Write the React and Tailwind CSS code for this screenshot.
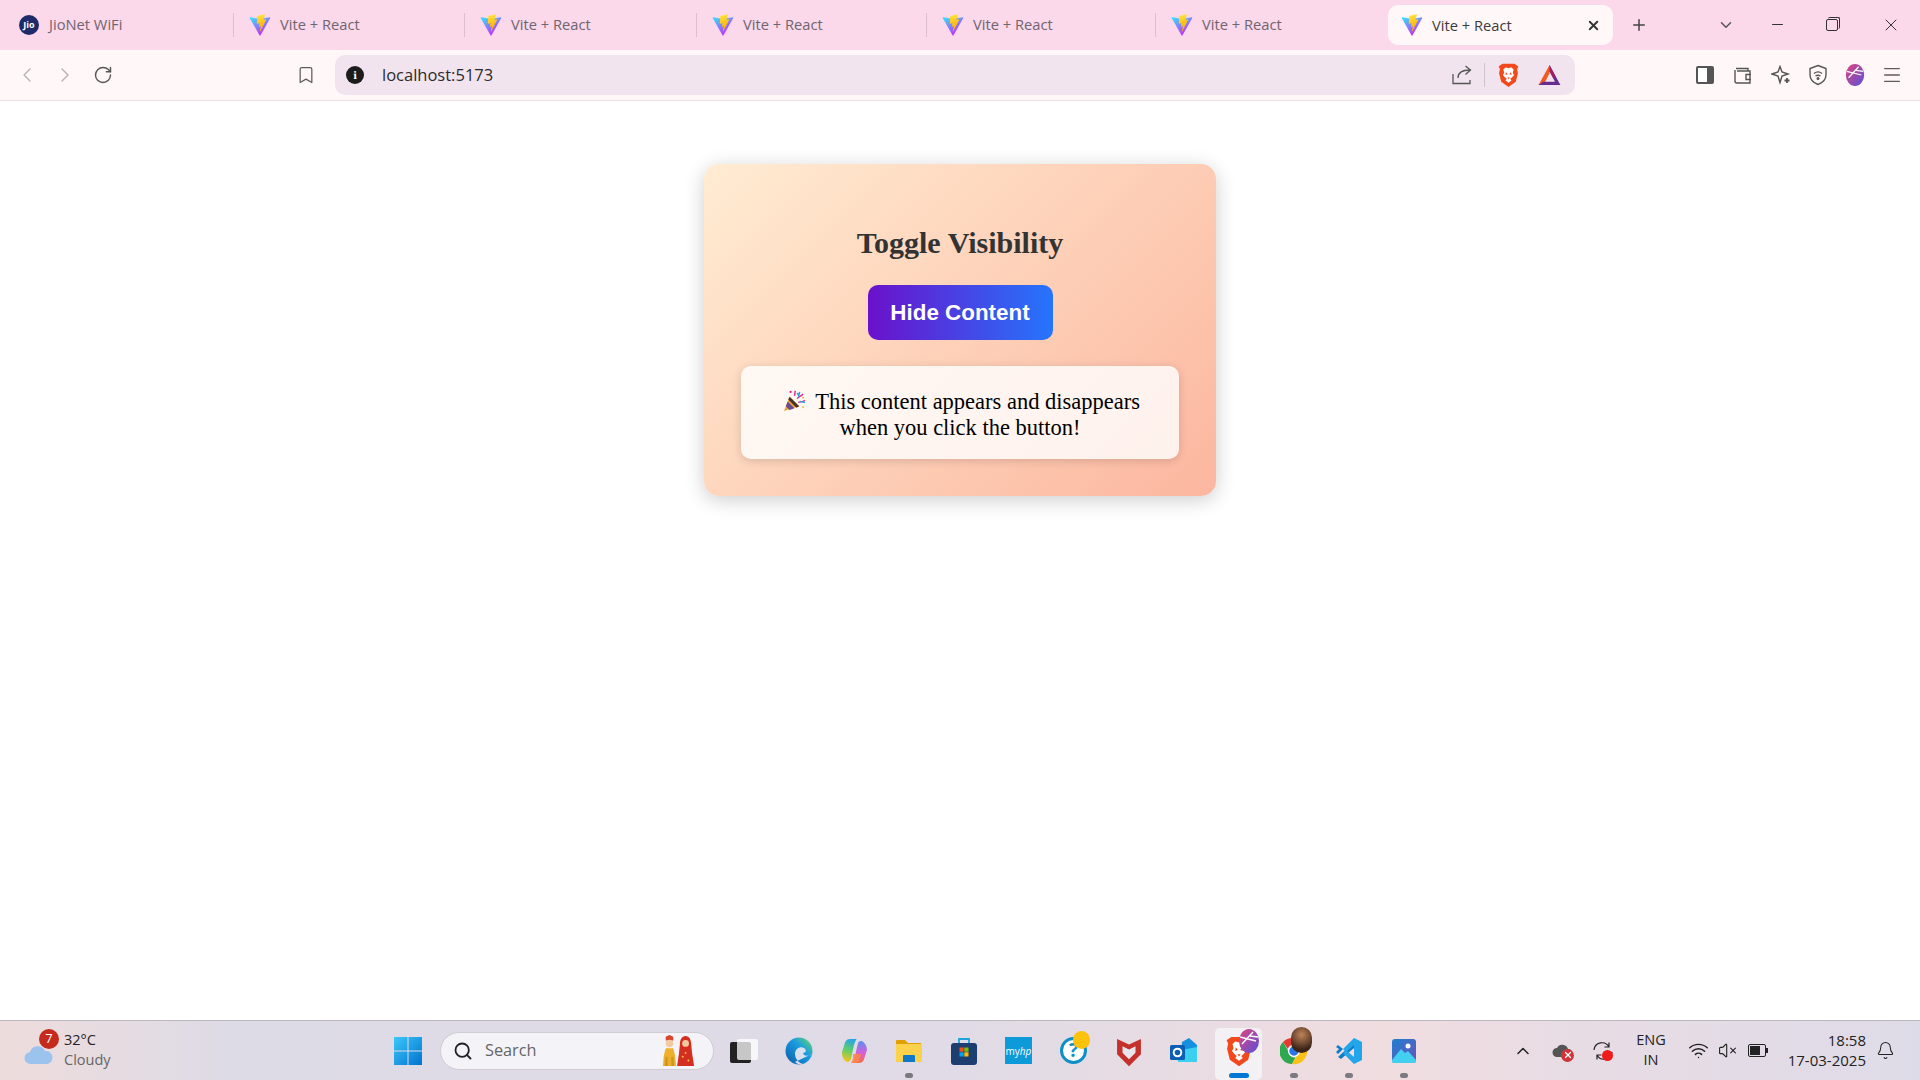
import { ChevronLeft, ChevronRight, RotateCw, Bookmark, X, Plus, ChevronDown, ChevronUp, Minus, Search, Wifi, VolumeX, Bell, Menu } from 'lucide-react'

const tabs = [
  { title: 'Vite + React', w: 'w-[231px]' },
  { title: 'Vite + React', w: 'w-[232px]' },
  { title: 'Vite + React', w: 'w-[230px]' },
  { title: 'Vite + React', w: 'w-[229px]' },
  { title: 'Vite + React', w: 'w-[233px]' },
]

function ViteIcon() {
  return (
    <svg viewBox="1.500 0.500 29 30" className="h-[22px] w-[22px] shrink-0">
      <defs>
        <linearGradient id="viteA" x1="0.1" y1="0.1" x2="0.6" y2="0.9">
          <stop offset="0" stopColor="#41d1ff" />
          <stop offset="1" stopColor="#bd34fe" />
        </linearGradient>
        <linearGradient id="viteB" x1="0.4" y1="0" x2="0.55" y2="0.9">
          <stop offset="0" stopColor="#ffea83" />
          <stop offset="0.1" stopColor="#ffdd35" />
          <stop offset="1" stopColor="#ffa800" />
        </linearGradient>
      </defs>
      <path fill="url(#viteA)" d="M29.8836 6.146L16.7418 29.6457c-.2714.4851-.9684.488-1.2439.0052L2.0956 6.1482c-.3-.5262.1498-1.1635.7462-1.0569l13.1559 2.3516a.7.7 0 0 0 .2532-.0005l12.8806-2.3478c.5942-.1083 1.0464.5241.7521 1.051z" />
      <path fill="url(#viteB)" d="M22.2644 1.0071l-9.7253 1.9056a.3571.3571 0 0 0-.2878.3294l-.5982 10.1038a.3571.3571 0 0 0 .4371.3689l2.7077-.6248c.2533-.0585.4822.1646.4301.4194l-.8045 3.9393c-.0542.2651.1947.4918.4536.4132l1.6724-.508c.2593-.0787.5084.1487.4536.414l-1.2784 6.1877c-.08.3871.4349.5981.6497.2662l.1434-.2215 7.925-15.8151c.1327-.2648-.096-.5667-.3872-.5104l-2.7872.5379c-.2619.0505-.4848-.1934-.4109-.4495l1.819-6.3056c.0739-.2565-.1497-.5006-.4121-.4494z" />
    </svg>
  )
}

function BraveIcon({ className }) {
  return (
    <svg viewBox="0 0 24 28" className={className}>
      <path fill="#f1491c" d="M12 28 3.500 22 1 12l1-5L0.500 4 5 1h14l4.500 3L22 7l1 5-2.500 10z" />
      <path fill="#fff" d="M12 6c-1 0-2-.8-3.500-.8L6 7.500l1 4-1.500 2.500L8 17l2 1.500-1.500 2L12 23l3.500-2.500-1.500-2L16 17l2.500-3L17 11.500l1-4-2.500-2.300C14 5.200 13 6 12 6z" />
      <path fill="#f1491c" d="M9 10.500l2 2.500-2.500 1zM15 10.500l-2 2.500 2.500 1zM10.500 17h3L12 19z" />
    </svg>
  )
}

function BatIcon() {
  return (
    <svg viewBox="0 0 24 22" className="h-[20px] w-[23px]">
      <path fill="#662d91" d="M12 0 24 22H13l5-3.500L12 7z" />
      <path fill="#f15a22" d="M12 0 0 22h5.500L12 9z" />
      <path fill="#9e1f63" d="M12 0l6.500 12-2 3L12 7z" />
      <path fill="#662d91" d="M0 22l5-3.500h13L24 22z" />
    </svg>
  )
}

function ProfileIcon({ className }) {
  return (
    <svg viewBox="0 0 20 24" className={className}>
      <defs>
        <linearGradient id="prof" x1="0" y1="0" x2="1" y2="1">
          <stop offset="0" stopColor="#e0457f" />
          <stop offset="1" stopColor="#5a50d8" />
        </linearGradient>
      </defs>
      <ellipse cx="10" cy="12" rx="10" ry="12" fill="url(#prof)" />
      <path d="M1 8l16 4M3 15 14 3M11 7l8 1" stroke="#fff" strokeWidth="1.300" fill="none" />
    </svg>
  )
}

function TabBar() {
  return (
    <div className="flex h-[50px] items-center bg-[#fbd8ea] pb-[1px] text-[14.700px] text-[#6f6570]">
      <div className="flex h-[49px] w-[233px] items-center gap-[10px] pl-[19px]">
        <span className="flex h-5 w-5 items-center justify-center rounded-full bg-[#1f2a6b] text-[9px] font-bold text-white">Jio</span>
        <span>JioNet WiFi</span>
      </div>
      {tabs.map((t, i) => (
        <div key={i} className={`flex h-[49px] items-center ${t.w}`}>
          <div className="flex h-6 items-center gap-[9px] border-l border-[#dcc0d0] pl-[15px]">
            <ViteIcon />
            <span>{t.title}</span>
          </div>
        </div>
      ))}
      <div className="mt-[1px] flex h-10 w-[225px] items-center rounded-[10px] bg-[#fff7f8] pl-[13px] pr-[12px] text-[#3f3a40]">
        <ViteIcon />
        <span className="ml-[9px]">Vite + React</span>
        <X size={15} strokeWidth={3} className="ml-auto text-[#333]" />
      </div>
      <Plus size={18} strokeWidth={2} className="ml-[17px] text-[#444]" />
      <ChevronDown size={18} strokeWidth={2} className="ml-[69px] text-[#555]" />
      <Minus size={17} strokeWidth={1.500} className="ml-[34px] text-[#333]" />
      <div className="relative ml-[40px] h-3 w-3 rounded-[2px] border border-[#333]">
        <div className="absolute -right-[3px] -top-[3px] h-3 w-3 rounded-[2px] border-r border-t border-[#333]" />
      </div>
      <X size={20} strokeWidth={1.200} className="ml-[43px] text-[#333]" />
    </div>
  )
}

function Toolbar() {
  return (
    <div className="flex h-[51px] items-center border-b border-[#f2dde3] bg-[#fff7f8] text-[#5d5d5d]">
      <ChevronLeft size={24} strokeWidth={1.300} className="ml-[15px] text-[#b5b0b3]" />
      <ChevronRight size={24} strokeWidth={1.300} className="ml-[14px] text-[#b5b0b3]" />
      <RotateCw size={20} strokeWidth={1.700} className="ml-[16px] text-[#555]" />
      <Bookmark size={20} strokeWidth={1.500} className="ml-[183px]" />
      <div className="ml-[19px] flex h-10 w-[1240px] items-center rounded-[10px] bg-[#f2e4ef]">
        <span className="ml-[11px] flex h-[18px] w-[18px] items-center justify-center rounded-full bg-[#1c1c1c] font-serif text-[12px] font-bold leading-none text-white">i</span>
        <span className="ml-[18px] font-['Open_Sans',sans-serif] text-[16.500px] text-[#2b2b2b]">localhost:5173</span>
        <svg viewBox="0 0 20 20" fill="none" stroke="#555" strokeWidth="1.300" className="ml-auto h-5 w-5">
          <path d="M1 9v9.500h17V15M6 13c0-5 4-8 12-8M13.500 1 18.500 5l-5 4.500" />
        </svg>
        <div className="ml-[12px] h-6 w-px bg-[#cdc2ca]" />
        <BraveIcon className="ml-[13px] h-[24px] w-[21px]" />
        <div className="ml-[19px] mr-[14px]"><BatIcon /></div>
      </div>
      <div className="ml-[121px] h-[18px] w-[18px] rounded-[2px] border-2 border-r-[7px] border-[#555] bg-white" />
      <svg viewBox="0 0 20 20" fill="none" stroke="#555" strokeWidth="1.400" className="ml-[19px] h-5 w-5">
        <path d="M3 3.500h12v2.500M2 5v11a2 2 0 0 0 2 2h13V6H4M18 9.500h-5v5h5" />
      </svg>
      <svg viewBox="0 0 20 20" fill="none" stroke="#555" strokeWidth="1.400" className="ml-[18px] h-5 w-5">
        <path d="M9 1.500 11 7l6 2-6 2-2 6.500L7 11 1 9l6-2z" />
        <path d="M16 13v5M13.500 15.500h5" strokeWidth="1.800" />
      </svg>
      <svg viewBox="0 0 20 22" fill="none" stroke="#555" strokeWidth="1.400" className="ml-[17px] h-[22px] w-5">
        <path d="M10 1.500 18 4.500v6c0 5-4 8.500-8 10-4-1.500-8-5-8-10v-6z" />
        <path d="M6 9.500c2.500-2 5.500-2 8 0M7.500 12c1.500-1 3.500-1 5 0" />
        <circle cx="10" cy="14.500" r="0.800" fill="#555" />
      </svg>
      <ProfileIcon className="ml-[17px] h-[22px] w-5" />
      <Menu size={22} strokeWidth={1.400} className="ml-[16px]" />
    </div>
  )
}

function PartyPopper() {
  return (
    <svg viewBox="-3 0 27 24" className="mr-[4px] inline-block h-[23px] w-[26px] align-[-3px]">
      <path fill="#e8a33a" d="M1 23 7 8l10 10z" />
      <path fill="#6b4a8c" d="M3 18l2-5 7 7-5 2z" />
      <path fill="#4a3325" d="M7 8l10 10-3 1.500L5.500 11z" />
      <path d="M12 7c1-2 0-3 1-5M15 10c2-3 4-2 6-5M16 14c2-1 4 0 7-2" stroke="#e91e8c" strokeWidth="1.500" fill="none" />
      <path d="M15 4l1.500 3 1-4M18 13c2 0 3 1 5 1" stroke="#19a8e0" strokeWidth="1.500" fill="none" />
      <circle cx="8" cy="3" r="1.200" fill="#e91e8c" />
      <circle cx="21" cy="9" r="1" fill="#f2b233" />
      <circle cx="21" cy="19" r="1" fill="#f2b233" />
    </svg>
  )
}

function ToggleCard() {
  return (
    <div className="mx-auto mt-[63px] w-[512px] rounded-[15px] bg-[linear-gradient(135deg,#ffecd2,#fcb69f)] px-[37px] pb-[37px] pt-[62px] text-center shadow-[0_4px_20px_rgba(0,0,0,0.2)]">
      <h2 className="font-['Liberation_Serif',serif] text-[30px] font-bold leading-[33px] text-[#333]">Toggle Visibility</h2>
      <button className="mt-[26px] h-[55px] w-[185px] rounded-[10px] bg-[linear-gradient(to_right,#6a11cb,#2575fc)] font-['Liberation_Sans',sans-serif] text-[22.400px] font-bold text-white">Hide Content</button>
      <div className="mt-[26px] rounded-[10px] bg-white/80 px-[20px] pb-[18px] pt-[23px] font-['Liberation_Serif',serif] text-[22.500px] leading-[26px] text-black shadow-[0_2px_10px_rgba(0,0,0,0.15)]">
        <PartyPopper /> This content appears and disappears when you click the button!
      </div>
    </div>
  )
}

function TaskIcon({ children, running, active }) {
  return (
    <div className="relative flex h-[60px] w-[55px] shrink-0 items-center justify-center">
      {active && <div className="absolute top-[7px] h-[52px] w-[47px] rounded-[5px] bg-[#f4f1f4]" />}
      <div className="relative flex h-7 w-7 items-center justify-center">{children}</div>
      {running && <div className={`absolute bottom-[3px] h-[5px] rounded-full ${active ? 'w-5 bg-[#0078d4]' : 'w-2 bg-[#7a7a80]'}`} />}
    </div>
  )
}

function DotBadge({ className }) {
  return <div className={`absolute rounded-full ${className}`} />
}

function Taskbar() {
  return (
    <div className="flex h-[60px] items-center border-t border-[#bdb8c0] bg-[linear-gradient(90deg,#eedcdc,#dddbe6_12%,#e0dbe6_50%,#f0dde0_72%,#e8dce4_82%,#dedbe8)] font-['Open_Sans',sans-serif]">
      <div className="flex w-[380px] shrink-0 items-center">
        <div className="relative ml-[24px] h-[32px] w-[30px]">
          <svg viewBox="0 0 30 20" className="absolute bottom-[2px] left-0 h-[22px] w-[30px]">
            <path fill="#9cc3ee" d="M7 20a6 6 0 0 1-1-12 8 8 0 0 1 15-1 6.500 6.500 0 0 1 2 13z" />
          </svg>
          <div className="absolute -top-[6px] left-[15px] flex h-[20px] w-[20px] items-center justify-center rounded-full bg-[#c42b1c] text-[13px] leading-none text-white">7</div>
        </div>
        <div className="-mt-[2px] ml-[10px] text-[14.500px] leading-[20px]">
          <div className="text-[#222]">32°C</div>
          <div className="text-[#666]">Cloudy</div>
        </div>
      </div>
      <div className="flex w-[56px] shrink-0 justify-center">
        <svg viewBox="0 0 30 30" className="h-[30px] w-[30px]">
          <defs>
            <linearGradient id="win" x1="0" y1="0" x2="1" y2="1">
              <stop offset="0" stopColor="#3cc8fa" />
              <stop offset="1" stopColor="#0072d0" />
            </linearGradient>
          </defs>
          <path fill="url(#win)" d="M1 1h13.500v13.500H1zM15.500 1H29v13.500H15.500zM1 15.500h13.500V29H1zM15.500 15.500H29V29H15.500z" />
        </svg>
      </div>
      <div className="ml-1 flex h-[38px] w-[274px] shrink-0 items-center rounded-full border border-[#cfccd4] bg-[#f4f3f7] pl-[12px] pr-[18px]">
        <Search size={20} strokeWidth={2.200} className="text-[#222]" />
        <span className="ml-[12px] text-[16.300px] text-[#666]">Search</span>
        <svg viewBox="0 0 36 36" className="ml-auto h-[34px] w-[34px]">
          <path fill="#d8472a" d="M5 7V3l4-2 4 2v4z" />
          <circle cx="9" cy="10" r="4" fill="#f3c9a0" />
          <path fill="#eeb02c" d="M5 15h8l2 8 1 11H2l1-11z" />
          <path fill="#c9961e" d="M4 34h3V24H5zM11 34h3l-1-10h-2z" />
          <path fill="#d42e20" d="M26 2c-4 0-6 4-6 9l-1 10-2 13h18l-2-13-1-10c0-5-2-9-6-9z" />
          <circle cx="26" cy="10" r="3.600" fill="#f3c9a0" />
          <circle cx="23" cy="24" r="1" fill="#f7c948" />
          <circle cx="29" cy="28" r="1" fill="#f7c948" />
          <circle cx="26" cy="20" r="1" fill="#f7c948" />
        </svg>
      </div>
      <div className="ml-[2px] flex shrink-0">
        <TaskIcon>
          <div className="absolute bottom-[2px] left-0 h-[21px] w-[21px] rounded-[2px] bg-[#222]" />
          <div className="absolute right-0 top-[2px] h-[21px] w-[21px] rounded-[2px] bg-white/75" />
        </TaskIcon>
        <TaskIcon>
          <svg viewBox="0 0 28 28" className="h-7 w-7">
            <defs>
              <linearGradient id="edge" x1="0" y1="1" x2="1" y2="0">
                <stop offset="0" stopColor="#0c59a4" />
                <stop offset="0.6" stopColor="#1b9de2" />
                <stop offset="1" stopColor="#6fdc5c" />
              </linearGradient>
            </defs>
            <circle cx="14" cy="14" r="13.500" fill="url(#edge)" />
            <path fill="#eee9f0" d="M27 17c-2 2-8 3-9-1 3 0 4-3 1-5-4-2-9 1-9 6 0 5 4 9 8 10-3 1-6 0-8-2z" opacity="0.9" />
          </svg>
        </TaskIcon>
        <TaskIcon>
          <svg viewBox="0 0 28 28" className="h-7 w-7">
            <defs>
              <linearGradient id="cpA" x1="0.6" y1="0" x2="0.4" y2="1">
                <stop offset="0" stopColor="#25a5e8" />
                <stop offset="0.5" stopColor="#5fcf6a" />
                <stop offset="1" stopColor="#f5c518" />
              </linearGradient>
              <linearGradient id="cpB" x1="0.5" y1="0" x2="0.5" y2="1">
                <stop offset="0" stopColor="#5a8ff0" />
                <stop offset="0.55" stopColor="#d85fd8" />
                <stop offset="1" stopColor="#fa6b3a" />
              </linearGradient>
            </defs>
            <path fill="url(#cpB)" d="M11 26h8c4 0 5-3 6-7l2-6c0-4-2-7-5-9-1 0-3 0-4 2l-3 13c-1 4-2 7-4 7z" />
            <path fill="url(#cpA)" d="M17 2H10C6 2 5 5 4 9l-2 6c0 4 1 8 5 10 2 0 3-1 4-3l3-14c1-3 2-6 3-6z" />
            <path fill="#fa8a4a" d="M13 17h8l-2 7c-.5 1.500-2 2-3 2h-5c1-1 1.500-3 2-5z" opacity="0.85" />
          </svg>
        </TaskIcon>
        <TaskIcon running>
          <svg viewBox="0 0 28 28" className="h-7 w-7">
            <path fill="#e0a100" d="M1 4a1 1 0 0 1 1-1h8l3 3h13v5H1z" />
            <path fill="#fcd24d" d="M1 7h26v18H1z" />
            <path fill="#0f78c8" d="M9 18h10a1 1 0 0 1 1 1v6H8v-6a1 1 0 0 1 1-1z" />
          </svg>
        </TaskIcon>
        <TaskIcon>
          <svg viewBox="0 0 28 28" className="h-7 w-7">
            <path d="M9 7V2h10v5" fill="none" stroke="#1ea4dc" strokeWidth="1.800" />
            <rect x="1" y="6" width="26" height="22" rx="3" fill="#1c3f70" />
            <path fill="#f05022" d="M9.500 10.500h4.200v4.200H9.500z" />
            <path fill="#7fba00" d="M14.300 10.500h4.200v4.200h-4.200z" />
            <path fill="#00a4ef" d="M9.500 15.300h4.200v4.200H9.500z" />
            <path fill="#ffb900" d="M14.300 15.300h4.200v4.200h-4.200z" />
          </svg>
        </TaskIcon>
        <TaskIcon>
          <div className="flex h-[27px] w-[27px] items-center justify-center bg-[#0d9ad8] text-[10px] leading-none text-white">my<span className="italic">hp</span></div>
        </TaskIcon>
        <TaskIcon>
          <div className="flex h-[27px] w-[27px] items-center justify-center rounded-full border-[3px] border-[#0f8fc8] bg-white text-[19px] font-bold leading-none text-[#0f8fc8]">?</div>
          <DotBadge className="-right-[2px] -top-[6px] h-[18px] w-[17px] bg-[#fdc20b]" />
        </TaskIcon>
        <TaskIcon>
          <svg viewBox="0 0 24 28" className="h-[32px] w-[26px] shrink-0">
            <path fill="#c4302b" d="M1 3l11 5 11-5v14l-11 11L1 17z" />
            <path fill="#e9e5ec" d="M6 9.500l6 3 6-3v6l-6 6-6-6z" />
          </svg>
        </TaskIcon>
        <TaskIcon>
          <svg viewBox="0 0 28 28" className="h-7 w-7">
            <path fill="#1490df" d="M12 5l7-4 8 7v15a2 2 0 0 1-2 2H10z" />
            <path fill="#3cd0f0" d="M6 14l21-4v13a2 2 0 0 1-2 2H8z" />
            <rect x="0" y="8" width="15" height="15" rx="1.500" fill="#0a5fb4" />
            <circle cx="7.500" cy="15.500" r="3.800" fill="none" stroke="#fff" strokeWidth="2" />
          </svg>
        </TaskIcon>
        <TaskIcon running active>
          <BraveIcon className="h-[32px] w-[26px] shrink-0" />
          <ProfileIcon className="absolute -right-[6px] -top-[8px] h-[24px] w-[20px]" />
        </TaskIcon>
        <TaskIcon running>
          <svg viewBox="0 0 28 28" className="h-7 w-7">
            <path fill="#e53b30" d="M14 1a13 13 0 0 1 11.300 6.500H14a6.500 6.500 0 0 0-6.200 4.500L3 5a13 13 0 0 1 11-4z" />
            <path fill="#2fa84f" d="M3 5l5.500 9.500a6.500 6.500 0 0 0 7 6L12 27A13 13 0 0 1 3 5z" />
            <path fill="#fbc116" d="M25.300 7.500A13 13 0 0 1 12 27l5.800-10a6.500 6.500 0 0 0 1-9.500z" />
            <circle cx="14" cy="14" r="5.400" fill="#2a75e6" stroke="#fff" strokeWidth="1.400" />
          </svg>
          <DotBadge className="-right-[4px] -top-[10px] h-[26px] w-[21px] bg-[radial-gradient(circle_at_50%_30%,#c08458,#3c2418_70%)]" />
        </TaskIcon>
        <TaskIcon running>
          <svg viewBox="0 0 28 28" className="h-7 w-7">
            <path fill="#0f7cc6" d="M1 10l2-2 5 4-5 5-2-2 3-3zM3 20l16-15v6L6 22z" />
            <path fill="#22a5ea" d="M19 1l8 4v18l-8 4-11-11 3-3 8 7V8l-8 7-3-3z" />
          </svg>
        </TaskIcon>
        <TaskIcon running>
          <svg viewBox="0 0 28 28" className="h-7 w-7">
            <defs>
              <linearGradient id="pho" x1="0" y1="0" x2="1" y2="1">
                <stop offset="0" stopColor="#1f7fd0" />
                <stop offset="1" stopColor="#6a52b8" />
              </linearGradient>
            </defs>
            <rect x="2" y="2" width="24" height="24" rx="3" fill="url(#pho)" />
            <circle cx="18" cy="9" r="2.500" fill="#fff" />
            <path fill="#43d0f0" d="M2 23l9-11 4 4 3-2 8 9v1a2 2 0 0 1-2 2H4a2 2 0 0 1-2-2z" />
          </svg>
        </TaskIcon>
      </div>
      <div className="ml-[82px] flex flex-1 items-center text-[#222]">
        <ChevronUp size={20} strokeWidth={1.800} />
        <div className="relative ml-[19px] h-4 w-5">
          <svg viewBox="0 0 20 16" className="h-4 w-5"><path fill="#555" d="M5 14a4.500 4.500 0 0 1 0-9 6 6 0 0 1 11 1 4 4 0 0 1 0 8z" /></svg>
          <div className="absolute -bottom-[3px] -right-[2px] flex h-[13px] w-[13px] items-center justify-center rounded-full bg-[#d13438]">
            <X size={10} strokeWidth={3} className="text-white" />
          </div>
        </div>
        <div className="relative ml-[21px] h-5 w-5">
          <svg viewBox="0 0 20 20" fill="none" stroke="#222" strokeWidth="1.200" className="h-5 w-5">
            <path d="M1 9a8 8 0 0 1 15-3M19 11a8 8 0 0 1-15 3M16 1.500V6h-4.500M4 18.500V14h4.500" />
          </svg>
          <div className="absolute bottom-0 right-0 h-[11px] w-[11px] rounded-full bg-[#f01a1a]" />
        </div>
        <div className="-mt-[1px] ml-[20px] w-[36px] text-center text-[14.500px] leading-[20px]">
          <div>ENG</div>
          <div>IN</div>
        </div>
        <Wifi size={21} strokeWidth={1.700} className="ml-[19px]" />
        <VolumeX size={19} strokeWidth={1.400} className="ml-[9px]" />
        <div className="relative ml-[11px] flex h-[13px] w-[18px] items-center rounded-[2px] border border-[#222] p-[1px]">
          <div className="h-full w-[10px] bg-[#222]" />
          <div className="absolute -right-[3px] h-[5px] w-[2px] bg-[#222]" />
        </div>
        <div className="-mt-[2px] ml-[15px] w-[85px] text-right text-[15px] leading-[20px]">
          <div>18:58</div>
          <div>17-03-2025</div>
        </div>
        <Bell size={19} strokeWidth={1.300} className="ml-[10px]" />
      </div>
    </div>
  )
}

export default function App() {
  return (
    <div className="flex h-screen flex-col overflow-hidden bg-white font-['Open_Sans',sans-serif]">
      <TabBar />
      <Toolbar />
      <main className="flex-1">
        <ToggleCard />
      </main>
      <Taskbar />
    </div>
  )
}
